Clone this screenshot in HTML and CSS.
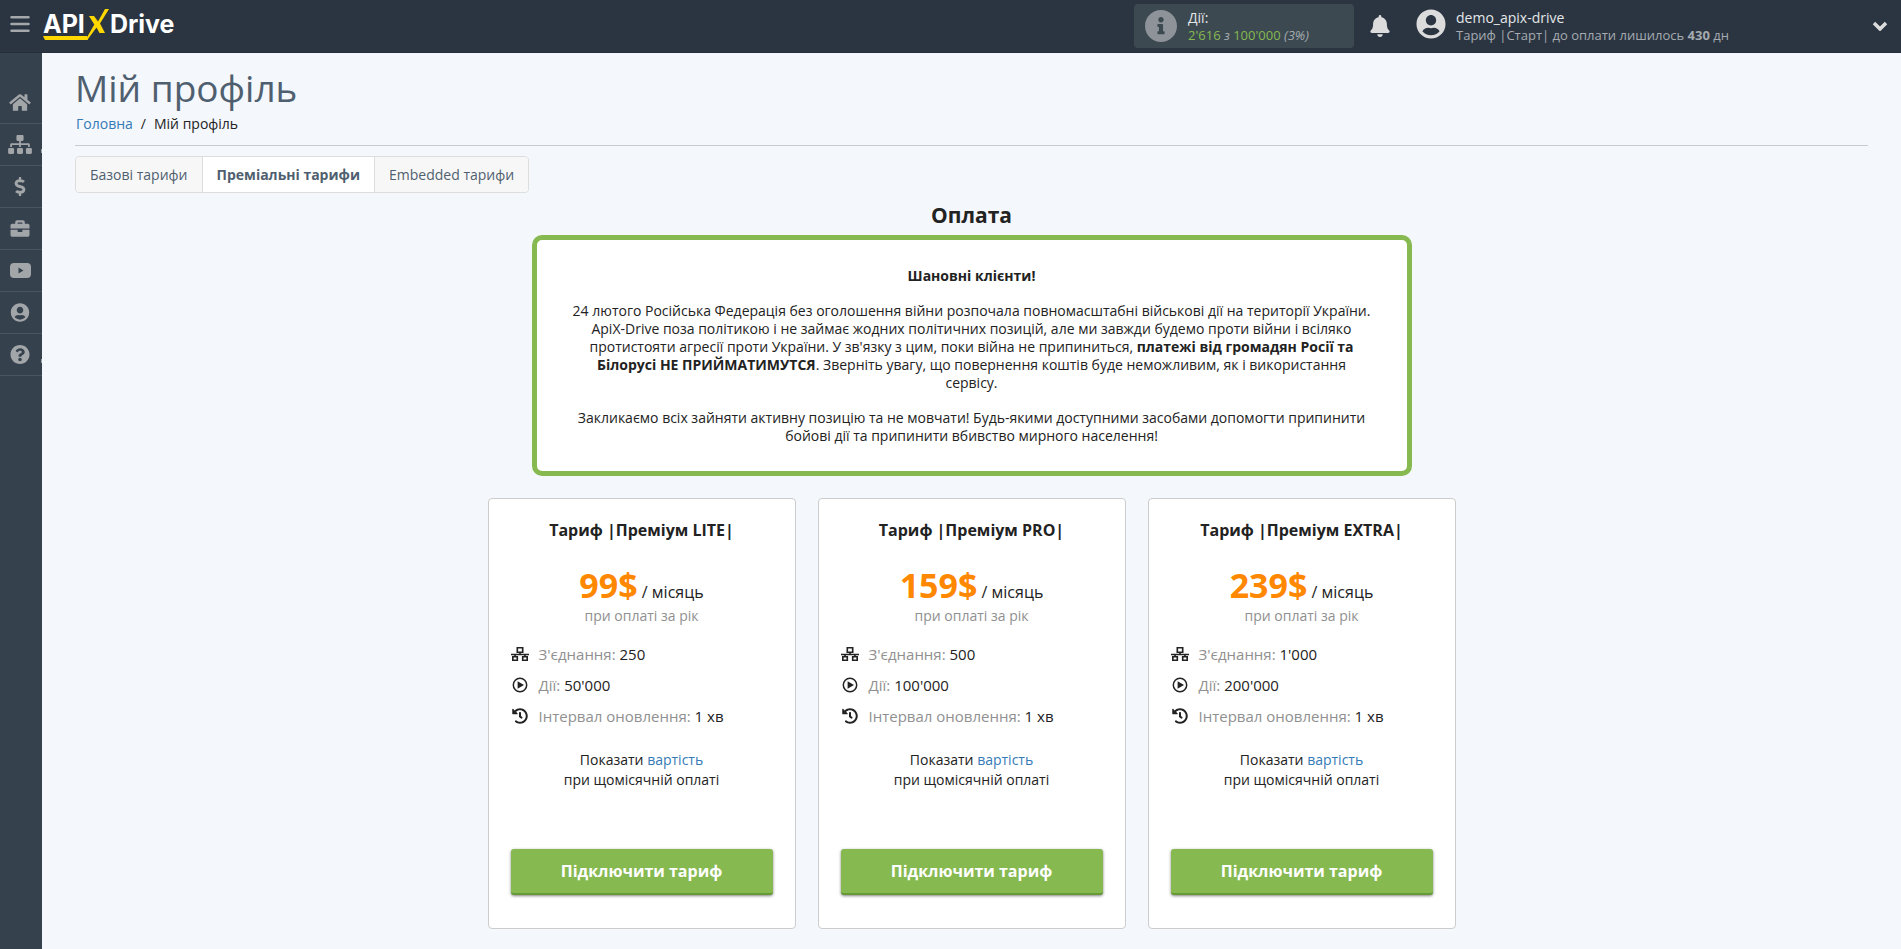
FILE: index.html
```html
<!DOCTYPE html>
<html lang="uk">
<head>
<meta charset="utf-8">
<title>Мій профіль</title>
<link rel="stylesheet" href="styles.css">
</head>
<body>
<svg class="sprite" aria-hidden="true">
  <symbol id="i-tree" viewBox="0 0 20 16">
    <path d="M7 1h6v5H7zM2 11h5v4H2zM13 11h5v4h-5zM10 6v2.500M0 8.500h20M4.500 8.500V11M15.500 8.500V11" fill="none" stroke="currentColor" stroke-width="1.800"/>
  </symbol>
  <symbol id="i-play" viewBox="0 0 16 16">
    <circle cx="8" cy="8" r="6.700" fill="none" stroke="currentColor" stroke-width="1.500"/>
    <path d="M5.600 4.200v7.600L12 8z"/>
  </symbol>
  <symbol id="i-history" viewBox="0 0 512 512">
    <path d="M504 255.531c.253 136.640-111.180 248.372-247.820 248.468-59.015.042-113.223-20.530-155.822-54.911-11.077-8.940-11.905-25.541-1.839-35.607l11.267-11.267c8.609-8.609 22.353-9.551 31.891-1.984C173.062 425.135 212.781 440 256 440c101.705 0 184-82.311 184-184 0-101.705-82.311-184-184-184-48.814 0-93.149 18.969-126.068 49.932l50.754 50.754c10.080 10.080 2.941 27.314-11.313 27.314H24c-8.837 0-16-7.163-16-16V38.627c0-14.254 17.234-21.393 27.314-11.314l49.372 49.372C129.209 34.136 189.552 8 256 8c136.810 0 247.747 110.780 248 247.531zm-180.912 78.784l9.823-12.630c8.138-10.463 6.253-25.542-4.210-33.679L288 256.349V152c0-13.255-10.745-24-24-24h-16c-13.255 0-24 10.745-24 24v135.651l65.409 50.874c10.463 8.137 25.541 6.253 33.679-4.210z"/>
  </symbol>
  <symbol id="i-user" viewBox="0 0 496 512">
    <path d="M248 8C111 8 0 119 0 256s111 248 248 248 248-111 248-248S385 8 248 8zm0 96c48.600 0 88 39.400 88 88s-39.400 88-88 88-88-39.400-88-88 39.400-88 88-88zm0 344c-58.700 0-111.300-26.600-146.500-68.200 18.800-35.400 55.600-59.800 98.500-59.800 2.400 0 4.800.4 7.100 1.100 13 4.200 26.600 6.900 40.900 6.900 14.300 0 28-2.700 40.900-6.900 2.300-.7 4.700-1.100 7.100-1.100 42.900 0 79.700 24.400 98.500 59.800C359.300 421.400 306.700 448 248 448z"/>
  </symbol>
</svg>

<header class="topbar">
  <button class="menu-btn" type="button" aria-label="Меню">
    <svg class="menu-icon" viewBox="0 0 17 16"><path d="M1 2h15M1 8h15M1 14h15" stroke="currentColor" stroke-width="2.400" stroke-linecap="round"/></svg>
  </button>
  <a class="logo" href="#">
    <span class="logo-text">API</span>
    <svg class="logo-x" viewBox="0 0 24 32"><path d="M3 8h5l4 5.500L19 1h4L14 15.500 19 25h-5.500L10.500 19.500 2 31H0l8.300-14.500z"/></svg>
    <span class="logo-text">Drive</span>
    <svg class="logo-line" viewBox="0 0 45 4"><path d="M0 0h44l1 4H2z"/></svg>
  </a>
  <div class="usage">
    <svg class="usage-icon" viewBox="8 8 496 496"><path d="M256 8C119.043 8 8 119.083 8 256c0 136.997 111.043 248 248 248s248-111.003 248-248C504 119.083 392.957 8 256 8zm0 110c23.196 0 42 18.804 42 42s-18.804 42-42 42-42-18.804-42-42 18.804-42 42-42zm56 254c0 6.627-5.373 12-12 12h-88c-6.627 0-12-5.373-12-12v-24c0-6.627 5.373-12 12-12h12v-64h-12c-6.627 0-12-5.373-12-12v-24c0-6.627 5.373-12 12-12h64c6.627 0 12 5.373 12 12v100h12c6.627 0 12 5.373 12 12v24z"/></svg>
    <div>
      <div class="top-title">Дії:</div>
      <div class="top-sub"><span class="green">2'616</span> <i>з</i> <span class="green">100'000</span> <i>(3%)</i></div>
    </div>
  </div>
  <button class="bell-btn" type="button" aria-label="Сповіщення">
    <svg class="bell-icon" viewBox="0 0 448 512"><path d="M224 512c35.320 0 63.970-28.650 63.970-64H160.030c0 35.350 28.650 64 63.970 64zm215.390-149.710c-19.320-20.760-55.470-51.990-55.470-154.290 0-77.700-54.480-139.900-127.940-155.160V32c0-17.670-14.320-32-31.980-32s-31.980 14.330-31.980 32v20.840C118.560 68.100 64.080 130.300 64.080 208c0 102.300-36.150 133.530-55.470 154.290-6 6.450-8.660 14.160-8.610 21.710.11 16.400 12.980 32 32.100 32h383.800c19.120 0 32-15.600 32.100-32 .05-7.550-2.610-15.270-8.610-21.710z"/></svg>
  </button>
  <button class="account" type="button">
    <svg class="avatar"><use href="#i-user"/></svg>
    <span class="account-text">
      <span class="top-title">demo_apix-drive</span>
      <span class="top-sub">Тариф |Старт| до оплати лишилось <b>430</b> дн</span>
    </span>
    <svg class="chevron" viewBox="0 0 16 10"><path d="M2 2l6 6 6-6" fill="none" stroke="currentColor" stroke-width="3.500"/></svg>
  </button>
</header>

<div class="shell">
  <nav class="sidebar">
    <a href="#" aria-label="Головна"><svg class="nav-icon wide" viewBox="0 0 576 512"><path d="M280.370 148.260L96 300.110V464a16 16 0 0 0 16 16l112.060-.29a16 16 0 0 0 15.920-16V368a16 16 0 0 1 16-16h64a16 16 0 0 1 16 16v95.640a16 16 0 0 0 16 16.050L464 480a16 16 0 0 0 16-16V300L295.670 148.260a12.190 12.190 0 0 0-15.300 0zM571.600 251.470L488 182.560V44.050a12 12 0 0 0-12-12h-56a12 12 0 0 0-12 12v72.610L318.470 43a48 48 0 0 0-61 0L4.340 251.470a12 12 0 0 0-1.600 16.900l25.500 31A12 12 0 0 0 45.150 301l235.220-193.740a12.190 12.190 0 0 1 15.300 0L530.900 301a12 12 0 0 0 16.900-1.600l25.500-31a12 12 0 0 0-1.700-16.930z"/></svg></a>
    <a class="has-sub" href="#" aria-label="Зв'язки"><svg class="nav-icon wide" viewBox="0 0 640 512"><path d="M128 352H32c-17.670 0-32 14.330-32 32v96c0 17.670 14.330 32 32 32h96c17.670 0 32-14.330 32-32v-96c0-17.670-14.330-32-32-32zm-24-80h192v48h48v-48h192v48h48v-57.590c0-21.170-17.230-38.410-38.410-38.410H344v-64h40c17.670 0 32-14.330 32-32V32c0-17.670-14.330-32-32-32H256c-17.670 0-32 14.330-32 32v96c0 17.670 14.330 32 32 32h40v64H94.410C73.230 224 56 241.230 56 262.410V320h48v-48zm264 80h-96c-17.670 0-32 14.330-32 32v96c0 17.670 14.330 32 32 32h96c17.670 0 32-14.330 32-32v-96c0-17.670-14.330-32-32-32zm240 0h-96c-17.670 0-32 14.330-32 32v96c0 17.670 14.330 32 32 32h96c17.670 0 32-14.330 32-32v-96c0-17.670-14.330-32-32-32z"/></svg></a>
    <a href="#" aria-label="Оплата"><svg class="nav-icon" viewBox="0 0 288 512"><path d="M209.200 233.400l-108-31.600C88.700 198.200 80 186.500 80 173.500c0-16.300 13.200-29.500 29.500-29.500h66.300c12.200 0 24.200 3.700 34.200 10.500 6.100 4.100 14.300 3.100 19.500-2l34.800-34c7.100-6.900 6.100-18.400-1.800-24.500C238 74.800 207.400 64.100 176 64V16c0-8.800-7.200-16-16-16h-32c-8.800 0-16 7.200-16 16v48h-2.500C45.800 64-5.400 118.700.5 183.600c4.200 46.100 39.400 83.600 83.800 96.600l102.500 30c12.500 3.700 21.200 15.300 21.200 28.300 0 16.300-13.200 29.500-29.500 29.500h-66.300C100 368 88 364.300 78 357.500c-6.100-4.100-14.300-3.100-19.500 2l-34.800 34c-7.100 6.900-6.100 18.400 1.800 24.500 24.500 19.200 55.100 29.900 86.500 30v48c0 8.800 7.200 16 16 16h32c8.800 0 16-7.200 16-16v-48.200c46.600-.9 90.300-28.600 105.700-72.700 21.500-61.600-14.600-124.800-72.500-141.700z"/></svg></a>
    <a href="#" aria-label="Послуги"><svg class="nav-icon" viewBox="0 0 512 512"><path d="M320 336c0 8.840-7.160 16-16 16h-96c-8.840 0-16-7.160-16-16v-48H0v144c0 25.600 22.400 48 48 48h416c25.600 0 48-22.400 48-48V288H320v48zm144-208h-80V80c0-25.600-22.400-48-48-48H176c-25.600 0-48 22.400-48 48v48H48c-25.600 0-48 22.400-48 48v80h512v-80c0-25.600-22.400-48-48-48zm-144 0H192V96h128v32z"/></svg></a>
    <a href="#" aria-label="Відео"><svg class="nav-icon video" viewBox="0 0 21 15"><path fill-rule="evenodd" d="M4 0h13q4 0 4 4v7q0 4-4 4H4Q0 15 0 11V4Q0 0 4 0zM8.500 4.500v6l5-3z"/></svg></a>
    <a href="#" aria-label="Профіль"><svg class="nav-icon"><use href="#i-user"/></svg></a>
    <a class="has-sub" href="#" aria-label="Допомога"><svg class="nav-icon" viewBox="8 8 496 496"><path d="M504 256c0 136.997-111.043 248-248 248S8 392.997 8 256C8 119.083 119.043 8 256 8s248 111.083 248 248zM262.655 90c-54.497 0-89.255 22.957-116.549 63.758-3.536 5.286-2.353 12.415 2.715 16.258l34.699 26.310c5.205 3.947 12.621 3.008 16.665-2.122 17.864-22.658 30.113-35.797 57.303-35.797 20.429 0 45.698 13.148 45.698 32.958 0 14.976-12.363 22.667-32.534 33.976C247.128 238.528 216 254.941 216 296v4c0 6.627 5.373 12 12 12h56c6.627 0 12-5.373 12-12v-1.333c0-28.462 83.186-29.647 83.186-106.667 0-58.002-60.165-102-116.531-102zM256 338c-25.365 0-46 20.635-46 46 0 25.364 20.635 46 46 46s46-20.636 46-46c0-25.365-20.635-46-46-46z"/></svg></a>
  </nav>

  <main class="content">
    <h1 class="page-title">Мій профіль</h1>
    <div class="breadcrumb"><a href="#">Головна</a><span>/</span><span>Мій профіль</span></div>
    <div class="tabs">
      <button type="button">Базові тарифи</button>
      <button class="active" type="button">Преміальні тарифи</button>
      <button type="button">Embedded тарифи</button>
    </div>

    <h2 class="section-title">Оплата</h2>
    <section class="notice">
      <p><b>Шановні клієнти!</b></p>
      <p>24 лютого Російська Федерація без оголошення війни розпочала повномасштабні військові дії на території України. ApiX-Drive поза політикою і не займає жодних політичних позицій, але ми завжди будемо проти війни і всіляко протистояти агресії проти України. У зв'язку з цим, поки війна не припиниться, <b>платежі від громадян Росії та Білорусі НЕ ПРИЙМАТИМУТСЯ</b>. Зверніть увагу, що повернення коштів буде неможливим, як і використання сервісу.</p>
      <p>Закликаємо всіх зайняти активну позицію та не мовчати! Будь-якими доступними засобами допомогти припинити бойові дії та припинити вбивство мирного населення!</p>
    </section>

    <div class="plans">
      <article class="plan">
        <h3>Тариф |Преміум LITE|</h3>
        <div class="price"><b>99$</b> / місяць</div>
        <div class="period">при оплаті за рік</div>
        <ul>
          <li><svg class="row-icon"><use href="#i-tree"/></svg><span><em>З'єднання:</em> 250</span></li>
          <li><svg class="row-icon"><use href="#i-play"/></svg><span><em>Дії:</em> 50'000</span></li>
          <li><svg class="row-icon"><use href="#i-history"/></svg><span><em>Інтервал оновлення:</em> 1 хв</span></li>
        </ul>
        <p>Показати <a href="#">вартість</a><br>при щомісячній оплаті</p>
        <button type="button">Підключити тариф</button>
      </article>
      <article class="plan">
        <h3>Тариф |Преміум PRO|</h3>
        <div class="price"><b>159$</b> / місяць</div>
        <div class="period">при оплаті за рік</div>
        <ul>
          <li><svg class="row-icon"><use href="#i-tree"/></svg><span><em>З'єднання:</em> 500</span></li>
          <li><svg class="row-icon"><use href="#i-play"/></svg><span><em>Дії:</em> 100'000</span></li>
          <li><svg class="row-icon"><use href="#i-history"/></svg><span><em>Інтервал оновлення:</em> 1 хв</span></li>
        </ul>
        <p>Показати <a href="#">вартість</a><br>при щомісячній оплаті</p>
        <button type="button">Підключити тариф</button>
      </article>
      <article class="plan">
        <h3>Тариф |Преміум EXTRA|</h3>
        <div class="price"><b>239$</b> / місяць</div>
        <div class="period">при оплаті за рік</div>
        <ul>
          <li><svg class="row-icon"><use href="#i-tree"/></svg><span><em>З'єднання:</em> 1'000</span></li>
          <li><svg class="row-icon"><use href="#i-play"/></svg><span><em>Дії:</em> 200'000</span></li>
          <li><svg class="row-icon"><use href="#i-history"/></svg><span><em>Інтервал оновлення:</em> 1 хв</span></li>
        </ul>
        <p>Показати <a href="#">вартість</a><br>при щомісячній оплаті</p>
        <button type="button">Підключити тариф</button>
      </article>
    </div>
  </main>
</div>
</body>
</html>
```
FILE: styles.css
```css
* { box-sizing: border-box; }

body {
  margin: 0;
  min-height: 100vh;
  display: flex;
  flex-direction: column;
  background: #f4f7fc;
  color: #222;
  font: 14px/18px "Open Sans", "Noto Sans", sans-serif;
}

h1, h2, h3, p, ul { margin: 0; padding: 0; }
button { font: inherit; color: inherit; border: 0; padding: 0; background: none; cursor: pointer; }
svg { fill: currentColor; flex: none; display: block; }
a { color: #337ab7; text-decoration: none; }
.sprite { display: none; }

.topbar {
  height: 53px;
  display: flex;
  align-items: center;
  background: #2b3541;
  color: #e4e6e8;
  border-bottom: 1px solid #252e39;
  padding: 0 13px 4px 10px;
}
.menu-btn { color: #a5a8ab; }
.menu-icon { width: 20px; height: 18px; }

.logo {
  position: relative;
  display: flex;
  align-items: center;
  margin-left: 13px;
  color: #fff;
  height: 32px;
}
.logo-text { font: 700 25px/30px Inter, "Open Sans", sans-serif; }
.logo-x { width: 24px; height: 32px; color: #ffd800; margin: 0 0 0 1px; }
.logo-line { position: absolute; left: 0; bottom: 0; width: 45px; height: 4px; color: #ffd800; }

.usage {
  display: flex;
  gap: 11px;
  align-items: center;
  width: 220px;
  height: 44px;
  margin-left: auto;
  padding: 0 11px;
  margin-top: 4px;
  border-radius: 4px;
  background: #3c4951;
}
.usage-icon { width: 32px; height: 32px; color: #8d9398; }
.top-title { display: block; font-size: 14px; line-height: 18px; }
.top-sub { display: block; font-size: 13px; line-height: 17px; color: #a5abb0; }
.green { color: #86b950; }

.bell-btn { margin: 4px 26px 0 16px; color: #dcdcdc; }
.bell-icon { width: 20px; height: 22px; }
.account { display: flex; align-items: center; gap: 10px; width: 472px; text-align: left; }
.avatar { width: 30px; height: 30px; color: #dcdcdc; }
.account-text { padding-top: 4px; }
.chevron { width: 16px; height: 10px; margin: 4px 0 0 auto; color: #dcdcdc; }

.shell { display: flex; flex: 1; }
.sidebar { width: 42px; flex: none; background: #36414e; padding-top: 29px; }
.sidebar a {
  position: relative;
  height: 42px;
  display: grid;
  place-items: center;
  padding-right: 2px;
  color: #a3a6a9;
  border-bottom: 1px solid #4a5563;
}
.nav-icon { width: 20px; height: 19px; }
.wide { width: 24px; }
.video { width: 21px; height: 15px; }
.has-sub::after { content: ""; position: absolute; right: 0; top: 25px; width: 1px; height: 4px; background: #a3a6a9; }

.content { flex: 1; padding: 11px 33px 20px; }
.page-title { font-size: 37px; line-height: 48px; font-weight: 400; color: #4f5f6f; }
.breadcrumb { display: flex; gap: 8px; padding: 3px 1px 12px; line-height: 18px; border-bottom: 1px solid #c8ccd2; }

.tabs { display: inline-flex; margin-top: 10px; border: 1px solid #ddd; border-radius: 4px; overflow: hidden; }
.tabs button { padding: 8px 14px; line-height: 19px; color: #4f5f6f; background: #f7f7f7; }
.tabs .active { font-weight: 700; background: #fff; border: solid #ddd; border-width: 0 1px; }

.section-title { text-align: center; font-size: 21px; line-height: 26px; margin-top: 9px; }

.notice {
  max-width: 880px;
  margin: 7px auto 22px;
  padding: 27px 35px 26px;
  display: grid;
  gap: 17px;
  border: 5px solid #86b950;
  border-radius: 10px;
  background: #fff;
  text-align: center;
}

.plans { display: flex; justify-content: center; gap: 22px; }
.plan {
  width: 308px;
  padding: 20px 22px 33px;
  border: 1px solid #ccc;
  border-radius: 4px;
  background: #fff;
  text-align: center;
}
.plan h3 { font-size: 16px; line-height: 22px; }
.price { margin-top: 28px; font-size: 16px; line-height: 32px; }
.price b { font-size: 34px; color: #ff8800; }
.period { color: #909090; line-height: 16px; }
.plan ul { list-style: none; margin: 14px 0 19px; }
.plan li { display: flex; align-items: center; gap: 9px; height: 31px; font-size: 15px; }
.plan em { font-style: normal; color: #909090; }
.row-icon { width: 18px; height: 16px; margin-right: 1px; }
.plan p { line-height: 20px; }
.plan button {
  width: 100%;
  height: 46px;
  margin-top: 59px;
  border-radius: 3px;
  border-bottom: 2px solid #659a34;
  background: #86b950;
  box-shadow: 0 1px 3px rgba(0, 0, 0, 0.5);
  color: #fff;
  font-size: 16px;
  font-weight: 700;
}
```
